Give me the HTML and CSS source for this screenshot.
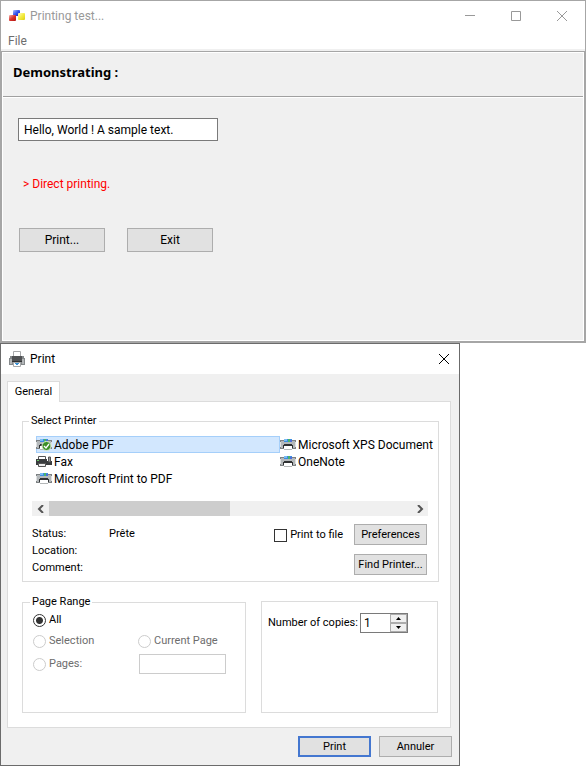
FILE: index.html
```html
<!DOCTYPE html>
<html lang="en">
<head>
<meta charset="utf-8">
<title>Printing test...</title>
<link rel="stylesheet" href="styles.css">
</head>
<body>
<svg class="defs" aria-hidden="true">
  <linearGradient id="red" x2="1" y2="1"><stop stop-color="#f3b3ad"/><stop offset=".5" stop-color="#d8342c"/><stop offset="1" stop-color="#b31310"/></linearGradient>
  <linearGradient id="blue" x2="1" y2="1"><stop stop-color="#b5c6fb"/><stop offset=".5" stop-color="#3355ee"/><stop offset="1" stop-color="#0f20c0"/></linearGradient>
  <linearGradient id="yellow" x2="1" y2="1"><stop stop-color="#fffcc8"/><stop offset=".5" stop-color="#f4ec45"/><stop offset="1" stop-color="#ddcf10"/></linearGradient>
  <symbol id="printer" viewBox="0 0 16 12">
    <path d="M0 1h16v9H0z" fill="#7d8183"/>
    <path d="M1 2h14v7H1z" fill="#b4b8ba"/>
    <path d="M0 3h1v5H0zM15 3h1v5h-1z" fill="#dfe1e2"/>
    <path d="M4 0h8v3H4z" fill="#3c8de0"/>
    <path d="M4 0h3v2H4z" fill="#7dbcf3"/>
    <path d="M8 0h2v3H8z" fill="#48b46d"/>
    <path d="M10 1h2v2h-2z" fill="#4c6fd8"/>
    <path d="M4 5h8v1h1v3H3V6h1z" fill="#303234"/>
    <path d="M4 7h8v4H4z" fill="#fff"/>
    <path d="M4 10h8v1H4z" fill="#b4b7b8"/>
  </symbol>
</svg>

<main class="window">
  <header class="titlebar">
    <svg class="app-icon" viewBox="0 0 16 12" aria-hidden="true">
      <rect x="4" y="0" width="7" height="6" rx="1" fill="url(#blue)"/>
      <rect x="0" y="5" width="7" height="6" rx="1" fill="url(#red)"/>
      <rect x="9" y="3" width="7" height="7" rx="1" fill="url(#yellow)"/>
    </svg>
    <h1 class="title">Printing test...</h1>
    <div class="controls">
      <button class="control" aria-label="Minimize"><svg viewBox="0 0 12 12"><path d="M1 5.500h10"/></svg></button>
      <button class="control" aria-label="Maximize"><svg viewBox="0 0 12 12"><path d="M1.500 1.500h9v9h-9z"/></svg></button>
      <button class="control" aria-label="Close"><svg viewBox="0 0 12 12"><path d="M1 1l10 10M11 1L1 11"/></svg></button>
    </div>
  </header>
  <nav class="menu"><button class="menu-item">File</button></nav>
  <section class="client">
    <h2 class="heading">Demonstrating :</h2>
    <div class="demo">
      <input class="sample" type="text" aria-label="Sample text" value="Hello, World ! A sample text.">
      <p class="note">&gt; Direct printing.</p>
      <div class="actions">
        <button class="button">Print...</button>
        <button class="button">Exit</button>
      </div>
    </div>
  </section>
</main>

<section class="dialog" role="dialog" aria-labelledby="dialog-title">
  <header class="dialog-bar">
    <svg class="dialog-icon" viewBox="0 0 16 16" aria-hidden="true">
      <path d="M4.500 6V.5h7V6z" fill="#fff" stroke="#a7a9ab"/>
      <path d="M1 5h14v2h1v7H0V7h1z" fill="#85898b"/>
      <path d="M1 8h2v5H1zM13 8h2v5h-2z" fill="#b4b7b9"/>
      <path d="M3 5h10v5H3z" fill="#505254"/>
      <path d="M3 10h10v1H3z" fill="#2e3032"/>
      <path d="M4.500 11.500h7v4h-7z" fill="#fff" stroke="#a7a9ab"/>
      <path d="M6 12h4v1H6zM7 13h2v1H7z" fill="#3b93d6"/>
    </svg>
    <h2 class="dialog-title" id="dialog-title">Print</h2>
    <button class="dialog-close" aria-label="Close"><svg viewBox="0 0 12 12"><path d="M1 1l10 10M11 1L1 11"/></svg></button>
  </header>
  <div class="dialog-body">
    <div class="tabs" role="tablist"><button class="tab" role="tab" aria-selected="true">General</button></div>
    <div class="panel" role="tabpanel">
      <fieldset class="group select-printer">
        <legend>Select Printer</legend>
        <ul class="printers">
          <li class="printer selected">
            <svg class="printer-icon" viewBox="0 0 16 12" aria-hidden="true">
              <use href="#printer"/>
              <circle cx="10.500" cy="7" r="4.500" fill="#3d8f26" stroke="#dff0d8"/>
              <path d="M8 7l2 2 3-4" fill="none" stroke="#fff" stroke-width="1.300"/>
            </svg>
            <span>Adobe PDF</span>
          </li>
          <li class="printer">
            <svg class="printer-icon" viewBox="0 0 16 12" aria-hidden="true">
              <path d="M2.500 4V.5h7V4" fill="#fff" stroke="#555"/>
              <path d="M0 3h11v6H0z" fill="#3a3c3e"/>
              <path d="M1 4h2v1H1z" fill="#6fc96a"/>
              <path d="M2.500 7.500h7v3h-7z" fill="#eee" stroke="#555"/>
              <path d="M11 5h5v4h-5z" fill="#3a3c3e"/>
              <path d="M12.500 1h2v5h-2z" fill="#999" stroke="#555"/>
            </svg>
            <span>Fax</span>
          </li>
          <li class="printer"><svg class="printer-icon" aria-hidden="true"><use href="#printer"/></svg><span>Microsoft Print to PDF</span></li>
          <li class="printer"><svg class="printer-icon" aria-hidden="true"><use href="#printer"/></svg><span>Microsoft XPS Document</span></li>
          <li class="printer"><svg class="printer-icon" aria-hidden="true"><use href="#printer"/></svg><span>OneNote</span></li>
        </ul>
        <div class="scrollbar">
          <button class="scroll-arrow" aria-label="Scroll left"><svg viewBox="0 0 8 8"><path d="M6 0L2 4l4 4"/></svg></button>
          <div class="track"><div class="thumb"></div></div>
          <button class="scroll-arrow" aria-label="Scroll right"><svg viewBox="0 0 8 8"><path d="M2 0l4 4-4 4"/></svg></button>
        </div>
        <div class="details">
          <dl class="status">
            <dt>Status:</dt><dd>Prête</dd>
            <dt>Location:</dt><dd></dd>
            <dt>Comment:</dt><dd></dd>
          </dl>
          <label class="choice to-file"><input class="box" type="checkbox">Print to file</label>
          <div class="tools">
            <button class="button small">Preferences</button>
            <button class="button small">Find Printer...</button>
          </div>
        </div>
      </fieldset>
      <div class="columns">
        <fieldset class="group range">
          <legend>Page Range</legend>
          <div class="range-grid">
            <label class="choice all"><input class="radio" type="radio" name="range" checked>All</label>
            <label class="choice"><input class="radio" type="radio" name="range" disabled>Selection</label>
            <label class="choice"><input class="radio" type="radio" name="range" disabled>Current Page</label>
            <label class="choice"><input class="radio" type="radio" name="range" disabled>Pages:</label>
            <input class="pages" type="text" aria-label="Pages" disabled>
          </div>
        </fieldset>
        <div class="group copies">
          <label for="copies">Number of copies:</label>
          <div class="spinner">
            <input class="count" id="copies" type="text" value="1">
            <div class="steps">
              <button class="step" aria-label="More copies"><svg viewBox="0 0 5 3"><path d="M0 3l2.500-3L5 3z"/></svg></button>
              <button class="step" aria-label="Fewer copies"><svg viewBox="0 0 5 3"><path d="M0 0l2.500 3L5 0z"/></svg></button>
            </div>
          </div>
        </div>
      </div>
    </div>
    <footer class="footer">
      <button class="button small default">Print</button>
      <button class="button small">Annuler</button>
    </footer>
  </div>
</section>
</body>
</html>
```
FILE: styles.css
```css
* {
  box-sizing: border-box;
}

body {
  margin: 0;
  background: #fff;
  color: #000;
  font: 12px/16px Roboto, "Noto Sans", sans-serif;
}

h1, h2, p, ul, dl, dd {
  margin: 0;
  padding: 0;
}

button, input {
  margin: 0;
  padding: 0;
  border-radius: 0;
  color: inherit;
  font: inherit;
}

svg {
  display: block;
}

.defs {
  position: absolute;
  width: 0;
  height: 0;
}

.window {
  border: 1px solid #a6a6a6;
  border-bottom-width: 2px;
}

.titlebar {
  display: flex;
  align-items: center;
  height: 29px;
  padding-left: 8px;
}

.app-icon {
  width: 16px;
  height: 12px;
}

.title {
  flex: 1;
  padding-left: 5px;
  color: #999;
  font-size: 12px;
  font-weight: 400;
}

.controls {
  display: flex;
}

.control {
  display: grid;
  place-items: center;
  width: 46px;
  height: 29px;
  border: 0;
  background: none;
}

.control svg, .dialog-close svg {
  width: 12px;
  height: 12px;
  fill: none;
  stroke: #999;
}

.menu {
  height: 21px;
  border-bottom: 2px solid #f0f0f0;
  padding: 3px 7px 0;
}

.menu-item {
  border: 0;
  background: none;
  color: #6d6d6d;
}

.client {
  min-height: 289px;
  border: 1px solid #fff;
  outline: 1px solid #a6a6a6;
  margin: 1px 1px 0;
  background: #f0f0f0;
}

.heading {
  height: 44px;
  padding: 11px 10px;
  border-bottom: 1px solid #a0a0a0;
  box-shadow: 0 1px #fff;
  font: 700 13px/16px "Noto Sans", "Open Sans", sans-serif;
}

.demo {
  padding: 21px 15px;
}

.sample {
  display: block;
  width: 200px;
  height: 23px;
  padding: 0 5px;
  border: 1px solid #7a7a7a;
  background: #fff;
}

.note {
  padding: 35px 5px 36px;
  color: #f00;
}

.actions {
  display: flex;
  gap: 22px;
  padding-left: 1px;
}

.button {
  width: 86px;
  height: 24px;
  border: 1px solid #adadad;
  background: #e1e1e1;
}

.dialog {
  max-width: 460px;
  border: 1px solid #6b6b6b;
  background: #f0f0f0;
}

.dialog-bar {
  display: flex;
  align-items: center;
  height: 30px;
  padding-left: 8px;
  background: #fff;
}

.dialog-icon {
  width: 16px;
  height: 16px;
}

.dialog-title {
  flex: 1;
  padding-left: 5px;
  font-size: 12px;
  font-weight: 400;
}

.dialog-close {
  display: grid;
  place-items: center;
  width: 30px;
  height: 30px;
  border: 0;
  background: none;
}

.dialog-close svg {
  stroke: #000;
}

.dialog-body {
  padding: 7px 7px 8px 6px;
  font-size: 11px;
  line-height: 14px;
}

.tabs {
  display: flex;
}

.tab {
  z-index: 1;
  width: 53px;
  height: 21px;
  margin-bottom: -1px;
  border: 1px solid #dcdcdc;
  border-bottom: 0;
  background: #fff;
}

.panel {
  margin-right: 1px;
  padding: 12px 11px 14px 14px;
  border: 1px solid #dcdcdc;
  background: #fff;
}

.group {
  min-width: 0;
  margin: 0;
  border: 1px solid #dcdcdc;
}

.group legend {
  margin-left: -3px;
  padding: 0 2px;
}

.select-printer {
  padding: 8px 10px 3px 9px;
}

.printers {
  display: grid;
  grid-template-rows: repeat(3, 17px);
  grid-template-columns: 244px minmax(0, 1fr);
  grid-auto-flow: column;
  height: 65px;
  padding-left: 4px;
  list-style: none;
  font-size: 12px;
}

.printer {
  display: flex;
  align-items: center;
  gap: 2px;
  white-space: nowrap;
}

.selected {
  background: #d2e7fe;
  box-shadow: inset 0 0 0 1px #a5cffa;
}

.printer-icon {
  flex: none;
  width: 16px;
  height: 12px;
}

.scrollbar {
  display: flex;
  height: 15px;
  background: #f0f0f0;
}

.scroll-arrow {
  display: grid;
  place-items: center;
  width: 17px;
  border: 0;
  background: none;
}

.scroll-arrow svg {
  width: 8px;
  height: 8px;
  fill: none;
  stroke: #555;
  stroke-width: 2;
}

.track {
  flex: 1;
}

.thumb {
  width: 50%;
  height: 100%;
  background: #cdcdcd;
}

.details {
  display: flex;
  align-items: flex-start;
  padding-top: 8px;
}

.status {
  display: grid;
  flex: 1;
  grid-template-columns: 77px 1fr;
  grid-auto-rows: 17px;
  padding-top: 3px;
}

.choice {
  display: flex;
  align-items: center;
  gap: 3px;
}

.choice:has(:disabled) {
  color: #6d6d6d;
}

.to-file {
  padding: 4px 11px 0 0;
}

.box {
  appearance: none;
  width: 13px;
  height: 13px;
  border: 1px solid #333;
  background: #fff;
}

.tools {
  display: grid;
  gap: 9px;
  padding-right: 1px;
}

.small {
  width: 73px;
  height: 21px;
}

.columns {
  display: grid;
  grid-template-columns: 224px 1fr;
  align-items: end;
  gap: 15px;
  padding: 13px 1px 0 0;
}

.range {
  height: 118px;
  padding: 4px 10px 0;
}

.range-grid {
  display: grid;
  grid-template-columns: 105px 1fr;
  grid-template-rows: 14px 28px 18px;
  align-items: center;
}

.all {
  grid-column: 1 / -1;
}

.radio {
  appearance: none;
  width: 13px;
  height: 13px;
  border: 1px solid #333;
  border-radius: 50%;
  background: #fff;
}

.radio:checked {
  background: radial-gradient(circle, #333 3px, #fff 4px);
}

.radio:disabled {
  border-color: #ccc;
}

.pages {
  width: 87px;
  height: 20px;
  margin-left: 1px;
  border: 1px solid #ccc;
  background: #fff;
}

.copies {
  display: flex;
  align-items: flex-start;
  justify-content: space-between;
  height: 112px;
  padding: 11px 29px 0 6px;
}

.copies label {
  line-height: 20px;
}

.spinner {
  display: flex;
  width: 48px;
  height: 20px;
  border: 1px solid #7a7a7a;
}

.count {
  flex: 1;
  min-width: 0;
  padding-left: 3px;
  border: 0;
  background: #fff;
  font-size: 12px;
}

.steps {
  display: grid;
  grid-template-rows: 1fr 1fr;
  width: 17px;
}

.step {
  display: grid;
  place-items: center;
  border: 1px solid #acacac;
  background: #f0f0f0;
}

.step svg {
  width: 5px;
  height: 3px;
}

.footer {
  display: flex;
  justify-content: flex-end;
  gap: 8px;
  padding-top: 8px;
}

.default {
  border: 2px solid #4477d0;
}
```
